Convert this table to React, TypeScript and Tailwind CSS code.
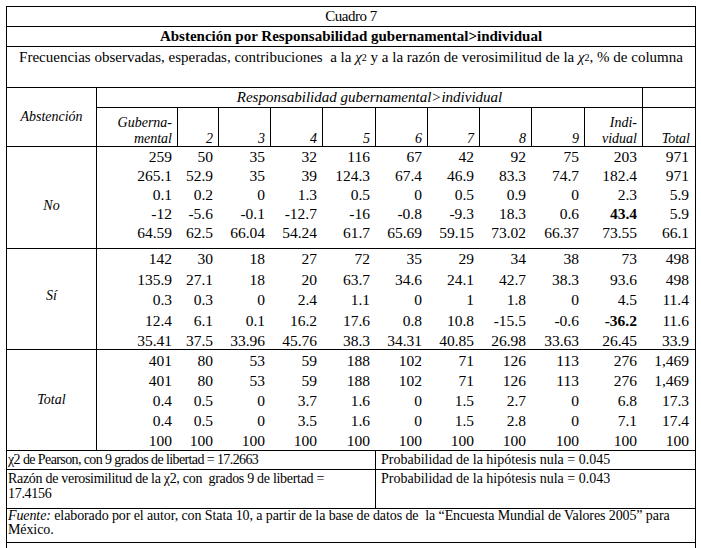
import React from 'react';

type Cell = string | { v: string; b: true };

interface Group {
  label: string;
  height: string;
  body: string;
  labelPad: string;
  rows: Cell[][];
}

const colWidths = ['w-[81px]', 'w-[41px]', 'w-[52px]', 'w-[52px]', 'w-[53px]', 'w-[52px]', 'w-[52px]', 'w-[52px]', 'w-[53px]', 'w-[58px]', 'w-[52px]'];

const numCols = 'grid grid-cols-[81px_41px_52px_52px_53px_52px_52px_52px_53px_58px_52px]';

const groups: Group[] = [
  {
    label: 'No',
    height: 'h-[102px]',
    body: 'pt-0 leading-[19px]',
    labelPad: 'pt-[15px]',
    rows: [
      ['259', '50', '35', '32', '116', '67', '42', '92', '75', '203', '971'],
      ['265.1', '52.9', '35', '39', '124.3', '67.4', '46.9', '83.3', '74.7', '182.4', '971'],
      ['0.1', '0.2', '0', '1.3', '0.5', '0', '0.5', '0.9', '0', '2.3', '5.9'],
      ['-12', '-5.6', '-0.1', '-12.7', '-16', '-0.8', '-9.3', '18.3', '0.6', { v: '43.4', b: true }, '5.9'],
      ['64.59', '62.5', '66.04', '54.24', '61.7', '65.69', '59.15', '73.02', '66.37', '73.55', '66.1'],
    ],
  },
  {
    label: 'Sí',
    height: 'h-[101px]',
    body: 'pt-0 leading-[20.5px]',
    labelPad: 'pb-[7px]',
    rows: [
      ['142', '30', '18', '27', '72', '35', '29', '34', '38', '73', '498'],
      ['135.9', '27.1', '18', '20', '63.7', '34.6', '24.1', '42.7', '38.3', '93.6', '498'],
      ['0.3', '0.3', '0', '2.4', '1.1', '0', '1', '1.8', '0', '4.5', '11.4'],
      ['12.4', '6.1', '0.1', '16.2', '17.6', '0.8', '10.8', '-15.5', '-0.6', { v: '-36.2', b: true }, '11.6'],
      ['35.41', '37.5', '33.96', '45.76', '38.3', '34.31', '40.85', '26.98', '33.63', '26.45', '33.9'],
    ],
  },
  {
    label: 'Total',
    height: 'h-[101px]',
    body: 'pt-[1px] leading-[20px]',
    labelPad: 'pb-[2px]',
    rows: [
      ['401', '80', '53', '59', '188', '102', '71', '126', '113', '276', '1,469'],
      ['401', '80', '53', '59', '188', '102', '71', '126', '113', '276', '1,469'],
      ['0.4', '0.5', '0', '3.7', '1.6', '0', '1.5', '2.7', '0', '6.8', '17.3'],
      ['0.4', '0.5', '0', '3.5', '1.6', '0', '1.5', '2.8', '0', '7.1', '17.4'],
      ['100', '100', '100', '100', '100', '100', '100', '100', '100', '100', '100'],
    ],
  },
];

const headCols: [string, string][] = [
  ['Guberna-', 'mental'],
  ['', '2'],
  ['', '3'],
  ['', '4'],
  ['', '5'],
  ['', '6'],
  ['', '7'],
  ['', '8'],
  ['', '9'],
  ['Indi-', 'vidual'],
  ['', 'Total'],
];

function Chi() {
  return (
    <>
      <i>χ</i>
      <sup className="relative -top-[1px] text-[10px]">2</sup>
    </>
  );
}

export default function App() {
  return (
    <div className="min-h-[548px] w-[701px] bg-white pl-[6px] pt-[6px] text-[15px] text-black [font-family:'Liberation_Serif','Times_New_Roman',serif]">
      <div className="w-[690px] border-x border-t border-black">
        <div className="h-[20px] border-b border-black text-center leading-[19px] tracking-[-0.5px]">Cuadro 7</div>
        <div className="h-[20px] border-b border-black text-center font-bold leading-[19px]">
          Abstención por Responsabilidad gubernamental&gt;individual
        </div>
        <div className="h-[41px] border-b border-black pt-[1px] text-center leading-[19px]">
          Frecuencias observadas, esperadas, contribuciones&nbsp; a la <Chi /> y a la razón de verosimilitud de la <Chi />, % de columna
        </div>

        {/* encabezado */}
        <div className="flex h-[59px] border-b border-black italic">
          <div className="flex w-[90px] items-center justify-center border-r border-black pb-[2px] text-[14px]">Abstención</div>
          <div className="flex flex-1 flex-col">
            <div className="flex h-[20px] border-b border-black leading-[19px]">
              <div className="w-[546px] border-r border-black text-center">Responsabilidad gubernamental&gt;individual</div>
              <div className="flex-1" />
            </div>
            <div className="flex flex-1 text-[14px]">
              {headCols.map(([a, b], i) => (
                <div
                  key={i}
                  className={`${colWidths[i]} flex flex-col pt-[7px] pr-[5px] text-right leading-[16px] ${i < 10 ? 'border-r border-black' : ''}`}
                >
                  <span>{a || '\u00a0'}</span>
                  <span>{b}</span>
                </div>
              ))}
            </div>
          </div>
        </div>

        {groups.map((g) => (
          <div key={g.label} className={`flex ${g.height} border-b border-black`}>
            <div className={`flex w-[90px] items-center justify-center border-r border-black text-[14px] italic ${g.labelPad}`}>
              {g.label}
            </div>
            <div className={`flex-1 text-[15.5px] ${g.body}`}>
              {g.rows.map((r, ri) => (
                <div key={ri} className={numCols}>
                  {r.map((c, ci) => (
                    <div key={ci} className="pr-[6px] text-right">
                      {typeof c === 'string' ? c : <b>{c.v}</b>}
                    </div>
                  ))}
                </div>
              ))}
            </div>
          </div>
        ))}

        {/* pie */}
        <div className="flex h-[19px] border-b border-black text-[14px] leading-[18px]">
          <div className="w-[369px] border-r border-black pl-[1px] tracking-[-0.6px]">χ2 de Pearson, con 9 grados de libertad = 17.2663</div>
          <div className="flex-1 pl-[5px]">Probabilidad de la hipótesis nula = 0.045</div>
        </div>
        <div className="flex h-[39px] border-b border-black text-[14px] leading-[15px]">
          <div className="w-[369px] border-r border-black pl-[1px] pt-[1px] pr-[20px] tracking-[-0.3px]">
            Razón de verosimilitud de la χ2, con&nbsp; grados 9 de libertad = 17.4156
          </div>
          <div className="flex-1 pl-[5px] pt-[1px]">Probabilidad de la hipótesis nula = 0.043</div>
        </div>
        <div className="h-[34px] border-b border-black pl-[1px] text-[14px] leading-[14px] tracking-[-0.1px]">
          <i>Fuente:</i> elaborado por el autor, con Stata 10, a partir de la base de datos de&nbsp; la “Encuesta Mundial de Valores 2005” para México.
        </div>
      </div>
      <div className="h-[5px] w-[690px] border-x border-black" />
    </div>
  );
}
